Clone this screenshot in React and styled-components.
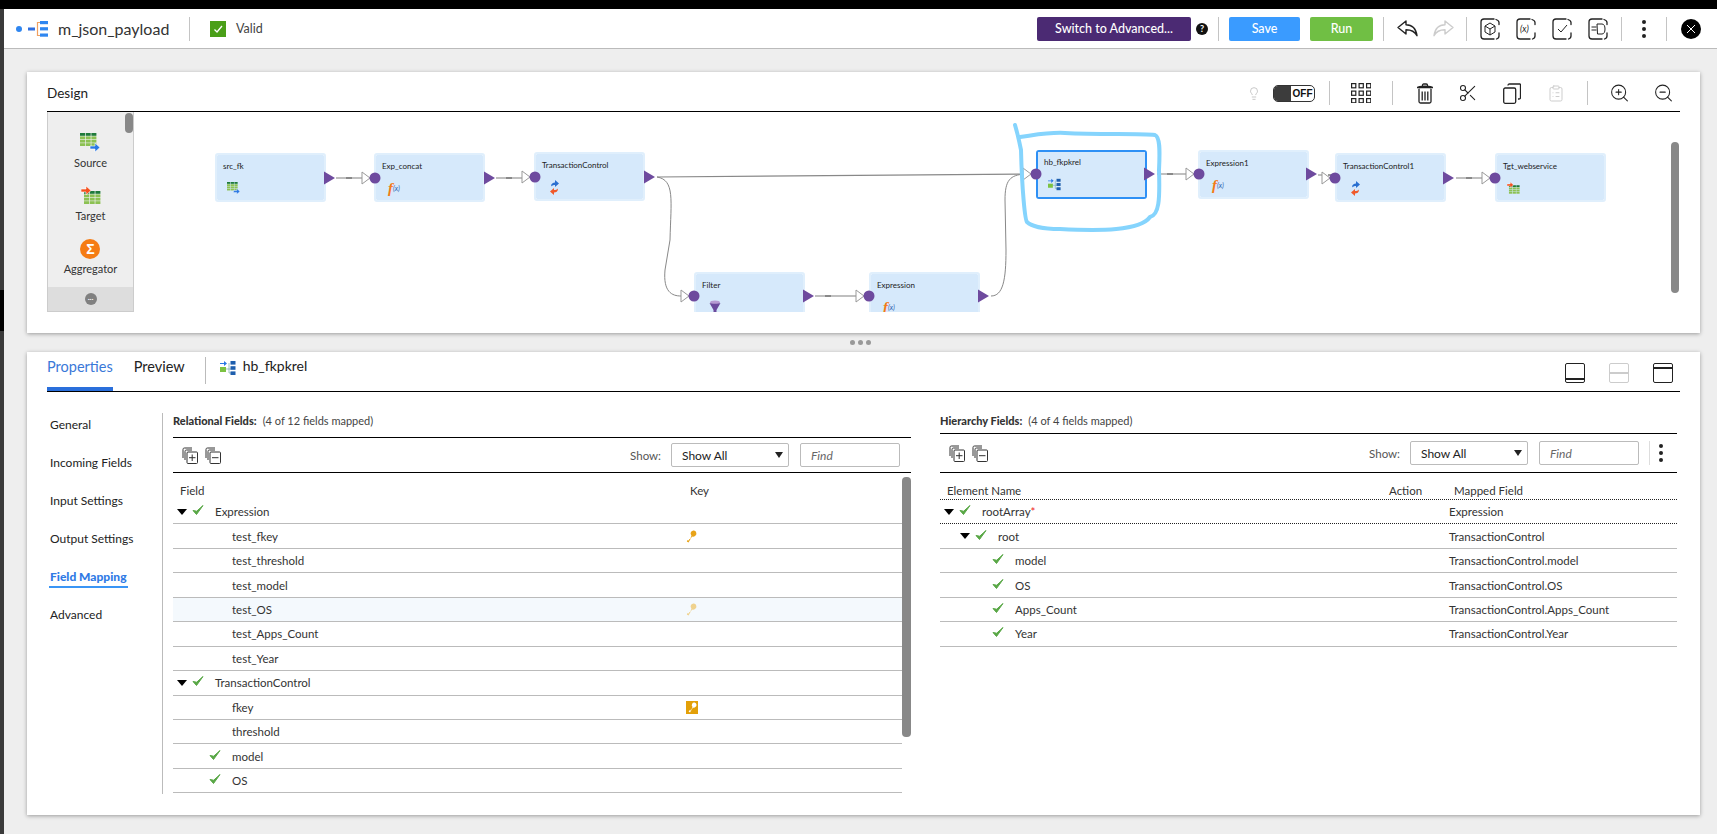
import React from "react";
import styled, { createGlobalStyle } from "styled-components";
import { Scissors, ZoomIn, ZoomOut, ClipboardList, Lightbulb } from "lucide-react";

const Global = createGlobalStyle`
  html, body { margin: 0; padding: 0; background: #eee; overflow: hidden; }
  * { box-sizing: border-box; }
  body { font-family: Lato, "Open Sans", sans-serif; color: #222; }
`;

const Page = styled.div`width:1717px;height:834px;display:flex;flex-direction:column;overflow:hidden;`;
const BlackBar = styled.div`height:9px;background:#000;flex:none;`;
const Body = styled.div`flex:1;display:flex;min-height:0;`;
const Edge = styled.div`width:4px;flex:none;display:flex;flex-direction:column;`;
const EdgePart = styled.div`height:${p => p.$h}px;flex:${p => (p.$h ? "none" : 1)};background:${p => p.$c};`;
const Main = styled.div`flex:1;display:flex;flex-direction:column;min-width:0;`;

/* header */
const Header = styled.header`height:40px;flex:none;background:#fff;border-bottom:1px solid #bbb;display:flex;align-items:center;padding:0 16px 0 8px;`;
const Title = styled.div`font-size:16px;margin-left:10px;width:111px;white-space:nowrap;color:#333;`;
const HSep = styled.span`width:1px;height:${p => p.$h || 24}px;background:#c4c4c4;margin-left:${p => p.$ml || 0}px;flex:none;`;
const ValidBox = styled.span`width:16px;height:16px;background:#4a9f18;margin-left:20px;display:flex;align-items:center;justify-content:center;flex:none;`;
const ValidText = styled.span`font-size:12.5px;margin-left:10px;color:#444;`;
const Tools = styled.div`margin-left:auto;display:flex;align-items:center;`;
const Btn = styled.button`border:0;border-radius:2px;height:24px;width:${p => p.$w}px;margin-left:${p => p.$ml || 0}px;background:${p => p.$bg};color:#fff;font:500 12.5px Lato,sans-serif;padding:0;flex:none;`;
const Help = styled.span`width:12px;height:12px;border-radius:50%;background:#111;color:#fff;font:700 9px Lato,sans-serif;display:flex;align-items:center;justify-content:center;margin-left:5px;flex:none;`;
const Slot = styled.span`display:flex;align-items:center;justify-content:center;flex:none;margin-left:${p => p.$ml || 0}px;width:${p => p.$w}px;height:${p => p.$hh || 22}px;`;
const Close = styled.span`width:20px;height:20px;border-radius:50%;background:#000;margin-left:14px;display:flex;align-items:center;justify-content:center;flex:none;`;

/* panels */
const Panel = styled.section`background:#fff;box-shadow:0 1px 4px rgba(0,0,0,.35);margin:${p => p.$mt}px 17px 0 23px;height:${p => p.$h}px;padding:0 20px;flex:none;`;
const Handle = styled.div`height:19px;display:flex;align-items:center;justify-content:center;gap:3px;padding-right:0;`;
const HDot = styled.i`width:5px;height:5px;border-radius:50%;background:#999;display:block;`;
const DesignHead = styled.div`height:40px;border-bottom:1px solid #000;display:flex;align-items:center;padding:3px 6px 0 0;`;
const DesignTitle = styled.div`font-size:13.5px;color:#222;`;
const DesignBody = styled.div`display:flex;height:200px;`;
const Palette = styled.div`width:87px;flex:none;background:#eee;border:1px solid #ccc;border-top:0;display:flex;flex-direction:column;position:relative;`;
const PaletteList = styled.div`flex:1;padding-top:21px;display:flex;flex-direction:column;gap:16px;align-items:center;overflow:hidden;`;
const PaletteItem = styled.div`display:flex;flex-direction:column;align-items:center;`;
const PaletteLabel = styled.div`font-size:11px;line-height:14px;margin-top:3px;color:#333;`;
const PaletteFoot = styled.div`height:24px;background:#ddd;display:flex;align-items:center;justify-content:center;flex:none;`;
const MoreDot = styled.span`width:12px;height:12px;border-radius:50%;background:#808080;color:#fff;font:700 8px/9px Lato,sans-serif;text-align:center;`;
const Thumb = styled.div`position:absolute;background:#888;border-radius:4px;width:${p => p.$w}px;height:${p => p.$h}px;top:${p => p.$t}px;right:${p => p.$r}px;`;
const Sigma = styled.div`width:20px;height:20px;border-radius:50%;background:#f57c14;color:#fff;font:700 14px/20px "Liberation Sans",sans-serif;text-align:center;`;
const Canvas = styled.div`flex:1;position:relative;overflow:hidden;`;
const Wires = styled.svg`position:absolute;left:0;top:0;pointer-events:none;`;
const Node = styled.div`position:absolute;left:${p => p.$x - 134}px;top:${p => p.$y - 112}px;width:${p => p.$sel ? 111 : 111}px;height:49px;background:#d6e9fb;border-radius:3px;
  ${p => p.$sel ? "border:2px solid #2e90f5;" : "border:2px solid #fff;box-shadow:inset 0 0 0 0 #fff,0 0 0 0 #fff;outline:2px solid #e0effc;outline-offset:-2px;padding:0;"}
  ${p => !p.$sel && "background-clip:padding-box;"}
`;
const NodeInner = styled.div`position:absolute;inset:${p => p.$sel ? 0 : 1}px;background:#d6e9fb;padding:4px 0 0 ${p => p.$sel ? 6 : 5}px;`;
const NodeName = styled.div`font-size:8px;line-height:12px;color:#222;white-space:nowrap;`;
const NodeIcon = styled.div`margin:${p => p.$mt || 9}px 0 0 ${p => p.$ml || 4}px;height:14px;display:flex;align-items:center;`;
const Fx = styled.span`font:italic 700 15px/14px "Liberation Serif",serif;color:#f47b16;`;
const FxSub = styled.span`font:italic 7px/14px Lato,sans-serif;color:#2a62b0;`;

/* properties */
const TabRow = styled.div`display:flex;height:40px;border-bottom:1px solid #000;`;
const Tab = styled.div`font-size:14.5px;line-height:20px;padding-top:5px;height:39px;margin-left:${p => p.$ml || 0}px;color:${p => p.$on ? "#3a78d8" : "#222"};border-bottom:${p => p.$on ? "4px solid #2a6fdb" : "0"};`;
const TabSep = styled.span`width:1px;height:27px;background:#bbb;margin:5px 0 0 20px;`;
const TabIcon = styled.span`margin:8px 0 0 14px;height:16px;display:flex;`;
const TabName = styled.span`font-size:14px;line-height:20px;margin:4px 0 0 7px;`;
const ViewBtns = styled.div`margin-left:auto;padding:11px 7px 0 0;display:flex;gap:24px;align-items:flex-start;`;
const ViewBtn = styled.span`width:20px;height:20px;border:1.5px solid ${p => p.$off ? "#ccc" : "#222"};border-radius:2px;position:relative;display:block;&::after{content:"";position:absolute;left:0;right:0;height:1.5px;background:${p => p.$off ? "#ccc" : "#222"};top:${p => p.$at}px;}`;
const Content = styled.div`display:flex;margin-top:21px;height:381px;`;
const Side = styled.nav`width:116px;flex:none;border-right:1px solid #bbb;padding-left:3px;display:flex;flex-direction:column;gap:14px;`;
const SideItem = styled.div`font-size:12px;line-height:24px;width:max-content;height:${p => p.$on ? 24 : 24}px;font-weight:${p => p.$on ? 900 : 400};color:${p => p.$on ? "#2f7ae5" : "#222"};position:relative;
  ${p => p.$on && `&::after{content:"";position:absolute;left:-1px;right:-1px;top:21px;height:2px;background:#3a95f5;}`}`;
const Section = styled.div`width:${p => p.$w}px;margin-left:${p => p.$ml}px;flex:none;position:relative;`;
const SecTitle = styled.div`height:${p => p.$h}px;border-bottom:1px solid #000;box-sizing:content-box;font-size:11px;line-height:16px;color:#444;white-space:nowrap;`;
const SecBold = styled.b`font-weight:900;color:#333;margin-right:6px;`;
const Toolbar = styled.div`height:${p => p.$h}px;border-bottom:1px solid #000;box-sizing:content-box;display:flex;align-items:center;padding-left:${p => p.$pl}px;`;
const ExpIcon = styled.svg`margin-right:7px;flex:none;`;
const ShowLabel = styled.span`margin-left:auto;font-size:11.5px;color:#555;`;
const Select = styled.div`width:118px;height:24px;border:1px solid #bbb;border-radius:2px;margin-left:10px;font-size:12px;display:flex;align-items:center;justify-content:space-between;padding:0 5px 0 10px;`;
const Find = styled.div`width:100px;height:24px;border:1px solid #bbb;border-radius:2px;margin-left:11px;font-size:12px;font-style:italic;color:#666;display:flex;align-items:center;padding-left:10px;`;
const MoreWrap = styled.span`margin-left:10px;border-left:1px solid #ddd;height:24px;padding:0 14px 0 9px;display:flex;align-items:center;`;
const ColHead = styled.div`height:${p => p.$h}px;padding-top:9px;font-size:11.5px;line-height:18px;display:flex;color:#333;${p => p.$dot && "border-bottom:1px dotted #222;"}`;
const HeadCell = styled.span`width:${p => p.$w}px;padding-left:${p => p.$pl || 0}px;flex:none;`;
const List = styled.div`width:${p => p.$w}px;height:${p => p.$h}px;overflow:hidden;`;
const Row = styled.div`height:24.45px;display:flex;align-items:center;font-size:11.5px;color:#333;background:${p => p.$hl ? "#f4f9fd" : "#fff"};border-bottom:1px ${p => p.$dot ? "dotted #222" : "solid #bbb"};`;
const Tree = styled.div`width:${p => p.$w}px;flex:none;display:flex;align-items:center;padding-left:${p => p.$pad}px;`;
const Caret = styled.i`width:0;height:0;border-left:5.5px solid transparent;border-right:5.5px solid transparent;border-top:6px solid #000;margin-right:5px;flex:none;`;
const CheckWrap = styled.span`width:12px;height:12px;margin:-3px 11px 0 0;flex:none;display:flex;`;
const Req = styled.span`color:#e22;`;

/* icon drawings */
const Logo = () => (
  <svg width="36" height="18" viewBox="0 0 36 18">
    <circle cx="7" cy="9" r="3" fill="#2f86f0" />
    <rect x="16" y="7.5" width="7" height="3" fill="#2f6fe0" />
    <path d="M30 2.5H25.5V15.5H30" fill="none" stroke="#f0a060" strokeWidth="1.2" />
    <rect x="28" y="1" width="8" height="3.2" fill="#2f86f0" />
    <rect x="28" y="7.2" width="8" height="3.2" fill="#2f86f0" />
    <rect x="28" y="13.5" width="8" height="3.2" fill="#2f86f0" />
  </svg>
);
const Tick = ({ c = "#fff", s = 10 }) => (
  <svg width={s} height={s} viewBox="0 0 10 10"><path d="M1.5 5.5 4 8l5-6" fill="none" stroke={c} strokeWidth="1.3" /></svg>
);
const GreenCheck = () => (
  <CheckWrap><svg width="12" height="12" viewBox="0 0 12 12"><path d="M1 6.5 4.5 10.5 11 1.5 4.7 7.2Z" fill="#58a745" stroke="#58a745" strokeWidth="1" /></svg></CheckWrap>
);
const Table = ({ s = 20, arrow }) => {
  const src = arrow === "src";
  const ox = src ? 0 : 3, oy = src ? 0 : 5;
  const cells = [];
  for (let r = 0; r < 4; r++) for (let c = 0; c < 3; c++) cells.push(<rect key={r + "-" + c} x={ox + c * 5.7} y={oy + r * 3.4 + (src ? 0 : 0)} width="5" height="2.8" fill={r === 0 ? "#1f7a3a" : "#8cc152"} />);
  return (
    <svg width={s} height={s} viewBox="0 0 20 20">
      {cells}
      {src
        ? <path d="M10 13h5v-3l5 4.5-5 4.5v-3h-5z" fill="#2a78e4" stroke="#fff" strokeWidth=".6" />
        : <path d="M0 3h5V0l5 4.5L5 9V6H0z" fill="#f4511e" stroke="#fff" strokeWidth=".6" />}
    </svg>
  );
};
const Sync = () => (
  <svg width="13" height="15" viewBox="0 0 13 15">
    <path d="M3 6.5C3 3.5 5 2.5 7 2.5V0l4 3.5L7 7V5C5.5 5 4 5.5 3 6.5Z" fill="#2a6fd0" />
    <path d="M10 8.5C10 11.5 8 12.5 6 12.5V15L2 11.5 6 8v2c1.500 0 3-.5 4-1.500Z" fill="#f0592a" />
  </svg>
);
const HierIcon = ({ s = 16 }) => (
  <svg width={s} height={s} viewBox="0 0 16 16">
    <path d="M0 3h4V1l3 2.500-3 2.500V4H0z" fill="#2a78e4" />
    <rect x="0" y="7" width="6" height="5" fill="#7cc242" />
    <path d="M6 9h5M9 3v10h2" stroke="#7aa" strokeWidth=".7" fill="none" />
    <rect x="10.500" y="1" width="5" height="3.600" fill="#1f5fae" />
    <rect x="10.500" y="6.200" width="5" height="3.600" fill="#1f5fae" />
    <rect x="10.500" y="11.400" width="5" height="3.600" fill="#1f5fae" />
  </svg>
);
const Funnel = () => (
  <svg width="12" height="18" viewBox="0 0 12 18">
    <ellipse cx="6" cy="2.500" rx="5" ry="2" fill="#b79bd2" />
    <path d="M.5 3c1 1 10 1 11 0L7.500 10v8h-3v-8z" fill="#6b4a9c" />
  </svg>
);
const Reply = ({ c }) => (
  <svg width="21" height="17" viewBox="0 0 21 17"><path d="M1 7.500 9 1v3.700c6 0 10 4 11 11-2-4-5-6-11-6V14Z" fill="#fff" stroke={c} strokeWidth="1.400" strokeLinejoin="round" /></svg>
);
const Mirror = styled.span`display:flex;transform:scaleX(-1);`;
const BoxIcon = ({ children }) => (
  <svg width="20" height="22" viewBox="0 0 20 22" fill="none" stroke="#222" strokeWidth="1.300">
    <path d="M14 1H4a3 3 0 0 0-3 3v14a3 3 0 0 0 3 3h10M16 1.500c1.500.5 3 1.500 3 3v2M19 15v3c0 1.500-1 2.500-2.500 3" strokeLinecap="round" />
    {children}
  </svg>
);
const BoxText = styled.text`font:italic 9px Lato,sans-serif;fill:#222;stroke:none;`;
const Grid9 = () => (
  <svg width="20" height="20" viewBox="0 0 20 20" fill="none" stroke="#222" strokeWidth="1.200">
    {[0, 7.500, 15].flatMap(y => [0, 7.500, 15].map(x => <rect key={x + "_" + y} x={x + .6} y={y + .6} width="4.200" height="4.200" />))}
  </svg>
);
const Trash = () => (
  <svg width="18" height="21" viewBox="0 0 18 21" fill="none" stroke="#222" strokeWidth="1.300">
    <path d="M1 4.500h16M6.500 4.500V2.200c0-.7.500-1.200 1.200-1.200h2.600c.7 0 1.200.5 1.200 1.200v2.300" />
    <path d="M2 5c0 0 .5-1.500 7-1.500S16 5 16 5" strokeWidth="2.200" />
    <path d="M3 6v12.500c0 1 .6 1.500 1.500 1.500h9c.9 0 1.500-.5 1.500-1.500V6M6.200 8.500v9M9 8.500v9M11.800 8.500v9" />
  </svg>
);
const CopyIcon = () => (
  <svg width="18" height="21" viewBox="0 0 18 21" fill="none" stroke="#222" strokeWidth="1.300">
    <rect x=".7" y="5" width="12" height="15.300" rx="1.500" />
    <path d="M5 2.500C5 1.500 5.500 1 6.500 1h11M17.500 1v13.500c0 1-.5 1.500-1.500 1.500h-1" />
  </svg>
);
const Expand = ({ plus }) => (
  <ExpIcon width="16" height="17" viewBox="0 0 16 17" fill="none" stroke="#333" strokeWidth="1">
    <path d="M1 11V2.500C1 1.500 1.500 1 2.500 1H10" />
    <path d="M3 13V4.500C3 3.500 3.500 3 4.500 3H10" />
    <rect x="5" y="5" width="10.500" height="11.500" rx="1" />
    <path d={plus ? "M10.200 7.500v6.500M7 10.700h6.500" : "M7 10.700h6.500"} />
  </ExpIcon>
);
const Dots = () => (
  <svg width="4" height="18" viewBox="0 0 4 18" fill="#222"><circle cx="2" cy="2" r="2" /><circle cx="2" cy="9" r="2" /><circle cx="2" cy="16" r="2" /></svg>
);
const Key = ({ c = "#e8a317" }) => (
  <svg width="11" height="13" viewBox="0 0 11 13"><path d="M8 .5a3 3 0 0 1 1 5.500 3 3 0 0 1-3 .5L2.500 12.500 .8 11.500l.8-1.500 1.200.4.5-1.300 1-.1L5.400 5.500A3 3 0 0 1 8 .5Z" fill={c} /></svg>
);
const KeyBox = styled.span`width:12px;height:13px;background:#e3a008;display:flex;align-items:center;justify-content:center;`;

const BoxedKey = () => (
  <KeyBox><svg width="9" height="11" viewBox="0 0 11 13"><path d="M8 .5a3 3 0 0 1 1 5.500 3 3 0 0 1-3 .5L2.500 12.500 .8 11.500l.8-1.500 1.200.4.5-1.300 1-.1L5.400 5.500A3 3 0 0 1 8 .5Z" fill="#fff" /></svg></KeyBox>
);

const Toggle = styled.span`width:42px;height:17px;border:1px solid #333;border-radius:5px;overflow:hidden;display:flex;margin-left:12px;flex:none;`;
const ToggleDark = styled.span`width:17px;background:#3c3c3c;`;
const ToggleText = styled.span`flex:1;font:700 10px/15px "Liberation Sans",sans-serif;color:#111;text-align:center;`;

/* data */
const nodes = [
  { name: "src_fk", x: 215, y: 153, icon: <Table s={13} arrow="src" /> },
  { name: "Exp_concat", x: 374, y: 153, fx: true },
  { name: "TransactionControl", x: 534, y: 152, sync: true },
  { name: "Filter", x: 694, y: 272, funnel: true },
  { name: "Expression", x: 869, y: 272, fx: true },
  { name: "hb_fkpkrel", x: 1036, y: 150, icon: <HierIcon s={13} />, sel: true },
  { name: "Expression1", x: 1198, y: 150, fx: true },
  { name: "TransactionControl1", x: 1335, y: 153, sync: true },
  { name: "Tgt_webservice", x: 1495, y: 153, icon: <Table s={13} arrow="tgt" /> },
];
const links = [
  [336, 362, 178, 375], [496, 522, 178, 535, 177], [1157, 1186, 174, 1199], [1318, 1322, 175, 1335, 178],
  [1456, 1482, 178, 1495], [815, 856, 296, 869],
];
const outs = [[325, 178], [485, 178], [645, 177], [804, 296], [979, 296], [1145, 174], [1307, 174], [1444, 178]];
const ins = [[375, 178], [535, 177], [694, 296], [869, 296], [1036, 174], [1199, 174], [1335, 178], [1495, 178]];

const relRows = [
  { t: "Expression", group: 1 },
  { t: "test_fkey", key: "k" }, { t: "test_threshold" }, { t: "test_model" },
  { t: "test_OS", key: "f", hl: 1 }, { t: "test_Apps_Count" }, { t: "test_Year" },
  { t: "TransactionControl", group: 1 },
  { t: "fkey", key: "b" }, { t: "threshold" },
  { t: "model", check: 1 }, { t: "OS", check: 1 },
];
const hierRows = [
  { t: "rootArray", pad: 4, caret: 1, m: "Expression", dot: 1, req: 1 },
  { t: "root", pad: 20, caret: 1, m: "TransactionControl" },
  { t: "model", pad: 52, m: "TransactionControl.model" },
  { t: "OS", pad: 52, m: "TransactionControl.OS" },
  { t: "Apps_Count", pad: 52, m: "TransactionControl.Apps_Count" },
  { t: "Year", pad: 52, m: "TransactionControl.Year" },
];

const FindBar = ({ more }) => (
  <>
    <ShowLabel>Show:</ShowLabel>
    <Select>Show All<svg width="8" height="6" viewBox="0 0 8 6"><path d="M0 0h8L4 6z" fill="#222" /></svg></Select>
    <Find>Find</Find>
    {more ? <MoreWrap><Dots /></MoreWrap> : <Slot $w={11} />}
  </>
);

export default function App() {
  return (
    <Page>
      <Global />
      <BlackBar />
      <Body>
        <Edge>
          <EdgePart $h={281} $c="#3a3a3a" />
          <EdgePart $h={41} $c="#000" />
          <EdgePart $c="#3a3a3a" />
        </Edge>
        <Main>
          <Header>
            <Logo />
            <Title>m_json_payload</Title>
            <HSep $ml={20} />
            <ValidBox><Tick /></ValidBox>
            <ValidText>Valid</ValidText>
            <Tools>
              <Btn $w={154} $bg="#4b2a73">Switch to Advanced...</Btn>
              <Help>?</Help>
              <HSep $ml={10} />
              <Btn $w={71} $ml={10} $bg="#3a9bff">Save</Btn>
              <Btn $w={63} $ml={10} $bg="#70bf44">Run</Btn>
              <HSep $ml={10} />
              <Slot $w={21} $ml={13}><Reply c="#222" /></Slot>
              <Slot $w={21} $ml={15}><Mirror><Reply c="#ccc" /></Mirror></Slot>
              <HSep $ml={12} />
              <Slot $w={20} $ml={13}>
                <BoxIcon><path d="M10 5l5 3v6l-5 3-5-3V8zM5 8l5 3 5-3M10 11v6" strokeWidth="1" /></BoxIcon>
              </Slot>
              <Slot $w={20} $ml={16}><BoxIcon><BoxText x="4" y="14">(x)</BoxText></BoxIcon></Slot>
              <Slot $w={20} $ml={16}><BoxIcon><path d="M6 11l3 3 6-7" strokeWidth="1" /></BoxIcon></Slot>
              <Slot $w={20} $ml={16}><BoxIcon><path d="M3.500 9h5M3.500 12h5M9 6h5c2 0 3 2 3 5s-1 5-3 5H9.500z" strokeWidth="1" /></BoxIcon></Slot>
              <HSep $ml={13} />
              <Slot $w={4} $ml={20}><Dots /></Slot>
              <HSep $ml={20} />
              <Close><svg width="10" height="10" viewBox="0 0 10 10"><path d="M1 1l8 8M9 1l-8 8" stroke="#fff" strokeWidth="1" /></svg></Close>
            </Tools>
          </Header>

          <Panel $mt={23} $h={261}>
            <DesignHead>
              <DesignTitle>Design</DesignTitle>
              <Tools>
                <Slot $w={14}><Lightbulb size={19} color="#bbb" strokeWidth={1.400} /></Slot>
                <Toggle><ToggleDark /><ToggleText>OFF</ToggleText></Toggle>
                <HSep $ml={14} />
                <Slot $w={20} $ml={21}><Grid9 /></Slot>
                <HSep $ml={21} />
                <Slot $w={18} $ml={23}><Trash /></Slot>
                <Slot $w={20} $ml={24}><Scissors size={24} color="#222" strokeWidth={1.300} /></Slot>
                <Slot $w={18} $ml={25}><CopyIcon /></Slot>
                <Slot $w={18} $ml={26}><ClipboardList size={23} color="#ccc" strokeWidth={1.300} /></Slot>
                <HSep $ml={22} />
                <Slot $w={21} $ml={21}><ZoomIn size={24} color="#222" strokeWidth={1.200} /></Slot>
                <Slot $w={21} $ml={23}><ZoomOut size={24} color="#222" strokeWidth={1.200} /></Slot>
              </Tools>
            </DesignHead>
            <DesignBody>
              <Palette>
                <PaletteList>
                  <PaletteItem><Table arrow="src" /><PaletteLabel>Source</PaletteLabel></PaletteItem>
                  <PaletteItem><Table arrow="tgt" /><PaletteLabel>Target</PaletteLabel></PaletteItem>
                  <PaletteItem><Sigma>Σ</Sigma><PaletteLabel>Aggregator</PaletteLabel></PaletteItem>
                </PaletteList>
                <PaletteFoot><MoreDot>...</MoreDot></PaletteFoot>
                <Thumb $w={8} $h={20} $t={1} $r={0} />
              </Palette>
              <Canvas>
                {nodes.map(n => (
                  <Node key={n.name} $x={n.x} $y={n.y} $sel={n.sel}>
                    <NodeInner $sel={n.sel}>
                      <NodeName>{n.name}</NodeName>
                      {n.icon && <NodeIcon>{n.icon}</NodeIcon>}
                      {n.fx && <NodeIcon $ml={6}><Fx>f</Fx><FxSub>(x)</FxSub></NodeIcon>}
                      {n.sync && <NodeIcon $ml={6}><Sync /></NodeIcon>}
                      {n.funnel && <NodeIcon $ml={7} $mt={11}><Funnel /></NodeIcon>}
                    </NodeInner>
                  </Node>
                ))}
                <Wires width="1546" height="200" viewBox="134 112 1546 200">
                  <path d="M657 177L1028 174" fill="none" stroke="#888" strokeWidth="1.200" />
                  <path d="M657 177C675 180 671 200 670 240L665 270C663 292 672 296 681 296" fill="none" stroke="#888" strokeWidth="1" />
                  <path d="M991 296C1003 296 1006 280 1006 250L1005 200C1005 180 1010 175 1025 174" fill="none" stroke="#888" strokeWidth="1" />
                  {links.map(([a, b, y]) => (
                    <g key={a}>
                      <path d={`M${a} ${y}H${b}`} stroke="#aaa" strokeWidth="1.500" />
                      <path d={`M${a + 10} ${y}h6`} stroke="#777" strokeWidth="1.500" />
                    </g>
                  ))}
                  {ins.map(([x, y]) => (
                    <g key={x}>
                      <path d={`M${x - 13} ${y - 6}l8 6-8 6z`} fill="#fff" stroke="#999" />
                      <circle cx={x} cy={y} r="5.500" fill="#6e4a9e" />
                    </g>
                  ))}
                  {outs.map(([x, y]) => <path key={x} d={`M${x - 1} ${y - 6.500}l11 6.500-11 6.500z`} fill="#6e4a9e" />)}
                  <path d="M1015 125C1018 135 1019 140 1021 150C1022 190 1025 220 1027 222C1030 225 1040 229 1060 229C1100 231 1140 231 1150 217C1159 215 1160 200 1159 170C1160 150 1160 137 1155 135C1140 133 1100 135 1065 133C1050 132 1035 135 1020 137" fill="none" stroke="#85d4fd" strokeWidth="4" strokeLinecap="round" strokeLinejoin="round" />
                </Wires>
                <Thumb $w={8} $h={151} $t={30} $r={1} />
              </Canvas>
            </DesignBody>
          </Panel>

          <Handle><HDot /><HDot /><HDot /></Handle>

          <Panel $mt={0} $h={463}>
            <TabRow>
              <Tab $on>Properties</Tab>
              <Tab $ml={21}>Preview</Tab>
              <TabSep />
              <TabIcon><HierIcon /></TabIcon>
              <TabName>hb_fkpkrel</TabName>
              <ViewBtns>
                <ViewBtn $at={14} />
                <ViewBtn $at={8} $off />
                <ViewBtn $at={3} />
              </ViewBtns>
            </TabRow>
            <Content>
              <Side>
                <SideItem>General</SideItem>
                <SideItem>Incoming Fields</SideItem>
                <SideItem>Input Settings</SideItem>
                <SideItem>Output Settings</SideItem>
                <SideItem $on>Field Mapping</SideItem>
                <SideItem>Advanced</SideItem>
              </Side>
              <Section $w={738} $ml={10}>
                <SecTitle $h={24}><SecBold>Relational Fields:</SecBold>(4 of 12 fields mapped)</SecTitle>
                <Toolbar $h={34} $pl={9}>
                  <Expand plus /><Expand />
                  <FindBar />
                </Toolbar>
                <ColHead $h={27}>
                  <HeadCell $w={517} $pl={7}>Field</HeadCell>
                  <HeadCell $w={100}>Key</HeadCell>
                </ColHead>
                <List $w={729} $h={294}>
                  {relRows.map(r => (
                    <Row key={r.t} $hl={r.hl}>
                      <Tree $w={513} $pad={r.group ? 4 : r.check ? 36 : 59}>
                        {r.group && <Caret />}
                        {(r.group || r.check) && <GreenCheck />}
                        {r.t}
                      </Tree>
                      {r.key === "k" && <Key />}
                      {r.key === "f" && <Key c="#efd28e" />}
                      {r.key === "b" && <BoxedKey />}
                    </Row>
                  ))}
                </List>
                <Thumb $w={9} $h={260} $t={64} $r={0} />
              </Section>
              <Section $w={737} $ml={29}>
                <SecTitle $h={20}><SecBold>Hierarchy Fields:</SecBold>(4 of 4 fields mapped)</SecTitle>
                <Toolbar $h={38} $pl={9}>
                  <Expand plus /><Expand />
                  <FindBar more />
                </Toolbar>
                <ColHead $h={27} $dot>
                  <HeadCell $w={449} $pl={7}>Element Name</HeadCell>
                  <HeadCell $w={65}>Action</HeadCell>
                  <HeadCell $w={180}>Mapped Field</HeadCell>
                </ColHead>
                {hierRows.map(r => (
                  <Row key={r.t} $dot={r.dot}>
                    <Tree $w={509} $pad={r.pad}>
                      {r.caret && <Caret />}
                      <GreenCheck />
                      {r.t}{r.req && <Req>*</Req>}
                    </Tree>
                    {r.m}
                  </Row>
                ))}
              </Section>
            </Content>
          </Panel>
        </Main>
      </Body>
    </Page>
  );
}
